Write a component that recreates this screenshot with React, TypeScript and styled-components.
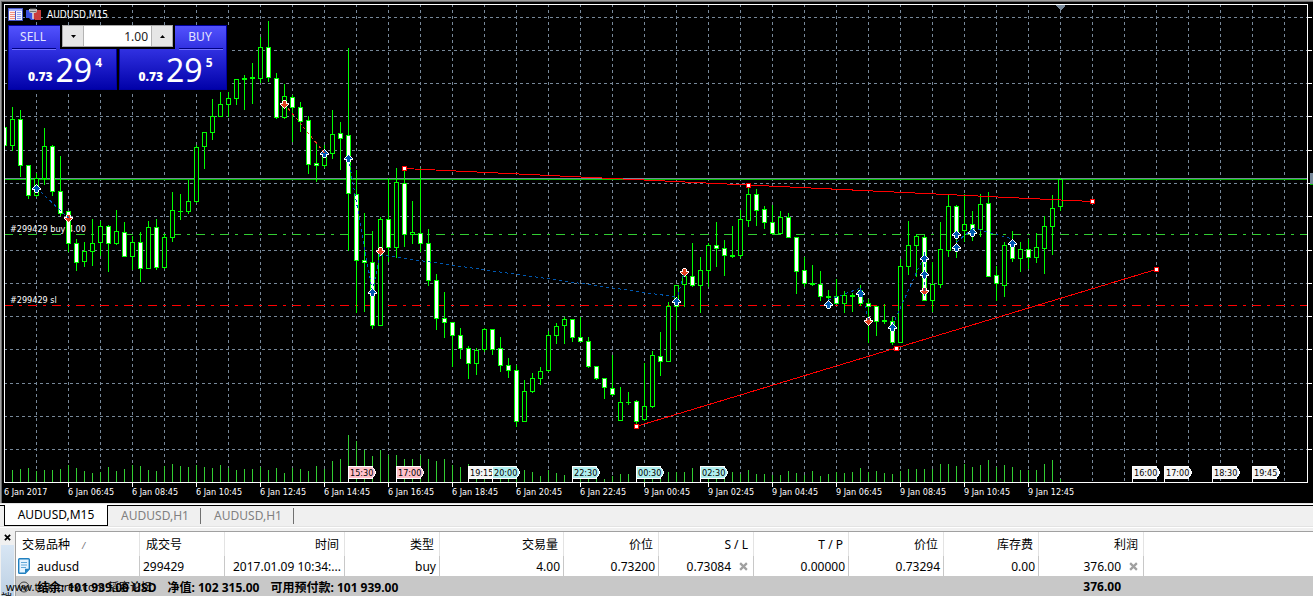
import React from "react";
import styled, { createGlobalStyle } from "styled-components";

const GlobalStyle = createGlobalStyle`
  * { box-sizing: border-box; }
  body {
    margin: 0;
    background: #f0f0f0;
    font-family: "Noto Sans", "Noto Sans CJK SC", sans-serif;
    font-size: 12px;
    color: #000;
    overflow: hidden;
  }
  button, input { font: inherit; margin: 0; padding: 0; }
`;

const LIME = "#00ff00";
const SLATE = "#778899";
const VOLUME = "#32cd32";
const UP = "#0058b0";
const DOWN = "#e04020";

/* ---------- data ---------- */

// high, body top, body bottom, low, 1 = falling (filled) candle; one every 8px from x = 4
const candles: number[][] = [
  [127, 127, 145, 145, 1], [107, 119, 145, 150, 0], [110, 119, 165, 176, 1], [165, 165, 195, 198, 1],
  [173, 178, 195, 196, 0], [128, 146, 178, 184, 0], [145, 146, 191, 195, 1], [156, 191, 213, 215, 1],
  [211, 211, 243, 251, 1], [239, 243, 262, 270, 1], [242, 251, 261, 266, 0], [219, 243, 251, 265, 0],
  [221, 226, 242, 255, 0], [225, 226, 243, 271, 1], [210, 231, 243, 244, 0], [222, 232, 256, 256, 1],
  [236, 242, 256, 269, 0], [232, 242, 268, 281, 1], [221, 227, 268, 268, 0], [219, 227, 267, 269, 1],
  [234, 237, 267, 268, 0], [192, 210, 237, 241, 0], [194, 211, 211, 219, 0], [180, 201, 211, 213, 0],
  [145, 147, 201, 202, 0], [132, 132, 146, 168, 0], [99, 116, 132, 139, 0], [92, 104, 116, 116, 0],
  [92, 98, 104, 116, 0], [79, 79, 98, 104, 0], [75, 78, 79, 109, 1], [63, 77, 78, 103, 1],
  [37, 47, 78, 82, 0], [21, 47, 77, 81, 1], [73, 78, 117, 118, 1], [84, 96, 117, 118, 0],
  [95, 97, 107, 141, 1], [102, 107, 121, 131, 1], [116, 120, 164, 173, 1], [144, 163, 165, 181, 1],
  [145, 152, 165, 167, 0], [110, 134, 153, 158, 0], [122, 133, 138, 169, 1], [48, 135, 193, 250, 1],
  [170, 194, 260, 312, 1], [213, 260, 262, 311, 1], [231, 262, 325, 328, 1], [217, 219, 325, 325, 0],
  [178, 219, 247, 261, 1], [168, 182, 247, 257, 0], [170, 183, 234, 246, 1], [201, 232, 234, 243, 0],
  [168, 233, 243, 251, 1], [229, 243, 280, 285, 1], [274, 280, 318, 329, 1], [292, 318, 322, 337, 1],
  [322, 322, 335, 366, 1], [328, 335, 348, 358, 1], [346, 348, 363, 378, 1], [348, 350, 363, 374, 0],
  [328, 329, 349, 351, 0], [329, 329, 349, 354, 1], [337, 348, 365, 371, 1], [358, 365, 370, 377, 1],
  [365, 370, 421, 426, 1], [380, 391, 421, 421, 0], [373, 378, 391, 392, 0], [367, 371, 378, 384, 0],
  [331, 335, 370, 371, 0], [323, 326, 335, 343, 0], [317, 319, 325, 343, 0], [319, 319, 337, 341, 1],
  [317, 337, 341, 341, 1], [337, 341, 366, 367, 1], [366, 366, 378, 379, 1], [378, 378, 387, 398, 1],
  [355, 388, 394, 395, 1], [387, 402, 420, 420, 0], [392, 402, 402, 404, 0], [400, 401, 421, 424, 1],
  [363, 406, 419, 420, 0], [351, 355, 406, 407, 0], [332, 356, 361, 375, 1], [302, 306, 361, 361, 0],
  [285, 285, 306, 329, 0], [270, 276, 284, 306, 0], [243, 276, 285, 286, 1], [257, 270, 285, 312, 0],
  [243, 245, 270, 286, 0], [222, 245, 248, 266, 1], [240, 248, 255, 275, 1], [226, 255, 256, 257, 1],
  [210, 219, 255, 257, 0], [188, 194, 220, 226, 0], [189, 194, 210, 225, 1], [206, 209, 222, 228, 1],
  [205, 222, 233, 233, 1], [211, 217, 233, 233, 0], [213, 217, 237, 237, 1], [237, 237, 271, 293, 1],
  [257, 270, 283, 286, 1], [265, 283, 284, 285, 1], [271, 284, 296, 300, 1], [290, 296, 297, 300, 1],
  [279, 296, 303, 303, 1], [291, 295, 303, 312, 0], [293, 295, 296, 311, 1], [285, 290, 303, 305, 1],
  [299, 303, 306, 342, 1], [306, 306, 321, 335, 1], [304, 320, 321, 323, 1], [317, 321, 342, 344, 1],
  [259, 266, 342, 342, 0], [221, 245, 266, 274, 0], [234, 236, 245, 276, 0], [235, 237, 300, 300, 1],
  [262, 284, 300, 311, 0], [222, 249, 284, 287, 0], [195, 206, 250, 256, 0], [205, 206, 233, 257, 1],
  [194, 224, 230, 241, 0], [211, 224, 229, 240, 1], [194, 204, 229, 236, 0], [192, 203, 276, 276, 1],
  [266, 275, 283, 300, 1], [242, 245, 285, 296, 0], [231, 242, 258, 261, 1], [242, 249, 258, 271, 0],
  [239, 249, 257, 268, 1], [233, 247, 257, 262, 0], [216, 226, 248, 273, 0], [195, 208, 226, 254, 0],
  [178, 179, 206, 210, 0],
];

// top of each volume bar, one every 8px from x = 12
const volumes: number[] = [
  470, 469, 468, 471, 470, 470, 469, 465, 468, 471, 473, 472, 467, 471, 469, 465, 466, 470, 471, 466,
  464, 466, 467, 465, 467, 468, 465, 468, 470, 469, 469, 467, 470, 468, 473, 468, 469, 471, 466,
  469, 461, 459, 435, 441, 450, 456, 450, 455, 455, 459, 459, 455, 459, 461, 459, 465, 467, 464, 474,
  474, 474, 474, 474, 474, 470, 472, 476, 470, 473, 475, 479, 479, 474, 474, 479, 476, 474, 474, 474, 474,
  474, 474, 472, 472, 472, 468, 474, 474, 474, 474, 472, 474, 470, 474, 474, 475, 475, 471, 473, 475,
  471, 476, 474, 472, 473, 472, 468, 472, 471, 473, 474, 471, 469, 469, 469, 469, 464, 464, 466, 464,
  467, 465, 460, 467, 465, 467, 470, 470, 470, 464, 460, 479,
];

const priceLevels = [17, 50, 83, 116, 150, 183, 216, 250, 283, 316, 349, 383, 416, 449];
const gridColumns = Array.from({ length: 80 }, (_, i) => 36 + i * 32);

const dates = [
  "6 Jan 2017", "6 Jan 06:45", "6 Jan 08:45", "6 Jan 10:45", "6 Jan 12:45", "6 Jan 14:45",
  "6 Jan 16:45", "6 Jan 18:45", "6 Jan 20:45", "6 Jan 22:45", "9 Jan 00:45", "9 Jan 02:45",
  "9 Jan 04:45", "9 Jan 06:45", "9 Jan 08:45", "9 Jan 10:45", "9 Jan 12:45",
];

const newsFlags: [number, string, string][] = [
  [348, "15:30", "#ffc0cb"], [396, "17:00", "#ffc0cb"], [468, "19:15", "#f5f5f5"],
  [492, "20:00", "#afeeee"], [572, "22:30", "#afeeee"], [636, "00:30", "#afeeee"],
  [700, "02:30", "#afeeee"], [1132, "16:00", "#f5f5f5"], [1164, "17:00", "#f5f5f5"],
  [1212, "18:30", "#f5f5f5"], [1252, "19:45", "#f5f5f5"],
];

const deals: [string, number, number, number, number][] = [
  [UP, 36, 188, 68, 218], [DOWN, 284, 104, 324, 153], [UP, 348, 158, 372, 292],
  [UP, 372, 292, 380, 251], [UP, 380, 255, 676, 297], [UP, 676, 301, 684, 272],
  [UP, 828, 300, 860, 288], [UP, 860, 288, 868, 320], [UP, 892, 325, 924, 255],
  [UP, 924, 252, 924, 296], [UP, 956, 242, 972, 229], [UP, 972, 228, 1012, 239],
];

const buys = [
  [36, 188], [324, 153], [348, 158], [372, 292], [676, 301], [828, 304], [860, 293], [892, 327],
  [924, 258], [924, 274], [956, 234], [956, 247], [972, 232], [1012, 243],
];
const sells = [[68, 218], [284, 104], [380, 251], [684, 272], [868, 321], [924, 291]];

/* ---------- chart drawing ---------- */

// half-width of each pixel row of an arrow, from the tip down
const outlineRows = [0, 1, 2, 3, 4, 4, 2, 2, 1];
const innerRows = [-1, 0, 1, 2, 3, 1, 1, 1, -1];

function Arrow({ x, y, down }: { x: number; y: number; down?: boolean }) {
  const row = (i: number) => (down ? y + 4 - i : y - 4 + i);
  return (
    <g>
      {outlineRows.map((w, i) => (
        <rect key={i} x={x - w} y={row(i)} width={w * 2 + 1} height={1} fill="#fff" />
      ))}
      {innerRows.map((w, i) =>
        w < 0 ? null : (
          <rect key={i} x={x - w} y={row(i)} width={w * 2 + 1} height={1} fill={down ? DOWN : UP} />
        ),
      )}
    </g>
  );
}

function Candle({ x, data }: { x: number; data: number[] }) {
  const [high, top, bottom, low, filled] = data;
  return (
    <g>
      <rect x={x} y={high} width={1} height={low - high + 1} fill={LIME} />
      <rect x={x - 2} y={top} width={5} height={bottom - top + 1} fill={LIME} />
      {bottom - top > 1 && (
        <rect x={x - 1} y={top + 1} width={3} height={bottom - top - 1} fill={filled ? "#fff" : "#000"} />
      )}
    </g>
  );
}

function Handle({ x, y }: { x: number; y: number }) {
  return (
    <g>
      <rect x={x - 2} y={y - 2} width={5} height={5} fill="#f00" />
      <rect x={x - 1} y={y - 1} width={3} height={3} fill="#fff" />
    </g>
  );
}

const PlotSvg = styled.svg`
  display: block;
  width: 100%;
  height: 477px;
  shape-rendering: crispEdges;
`;

const ChartText = styled.text`
  font-family: "DejaVu Sans Condensed", "DejaVu Sans", sans-serif;
  font-size: 9px;
  fill: ${(p) => p.color || "#fff"};
`;

function Plot() {
  return (
    <PlotSvg role="img" aria-label="AUDUSD M15 candlestick chart">
      <g transform="translate(-5 -5)">
        <g stroke={SLATE} strokeDasharray="3 3">
          {priceLevels.map((y) => (
            <line key={y} x1={4} x2="101%" y1={y + 0.5} y2={y + 0.5} />
          ))}
          {gridColumns.map((x) => (
            <line key={x} x1={x + 0.5} x2={x + 0.5} y1={4} y2={482} />
          ))}
        </g>
        {volumes.map((y, i) => (
          <rect key={i} x={12 + i * 8} y={y} width={1} height={482 - y} fill={VOLUME} />
        ))}
        <rect x={4} y={178} width="101%" height={1} fill={SLATE} />
        <rect x={4} y={179} width="101%" height={1} fill="#00c000" />
        <line x1={4} x2="101%" y1={234.5} y2={234.5} stroke={VOLUME} strokeDasharray="9 6 3 6" />
        <line x1={4} x2="101%" y1={305.5} y2={305.5} stroke="#f00" strokeDasharray="9 6 3 6" />
        <ChartText x={10} y={232}>#299429 buy 4.00</ChartText>
        <ChartText x={10} y={303}>#299429 sl</ChartText>
        {candles.map((c, i) => (
          <Candle key={i} x={4 + i * 8} data={c} />
        ))}
        <g stroke="#f00">
          <line x1={404} y1={168.5} x2={1092} y2={201.5} />
          <line x1={636} y1={426.5} x2={1156} y2={269.5} />
        </g>
        <Handle x={404} y={168} />
        <Handle x={748} y={185} />
        <Handle x={1092} y={201} />
        <Handle x={636} y={426} />
        <Handle x={896} y={348} />
        <Handle x={1156} y={269} />
        {sells.map(([x, y]) => (
          <Arrow key={`${x}-${y}`} x={x} y={y} down />
        ))}
        {buys.map(([x, y]) => (
          <Arrow key={`${x}-${y}`} x={x} y={y} />
        ))}
        {deals.map(([color, x1, y1, x2, y2], i) => (
          <line key={i} x1={x1 + 0.5} y1={y1} x2={x2 + 0.5} y2={y2} stroke={color} strokeDasharray="3 3" />
        ))}
        {newsFlags.map(([x, label, color]) => (
          <g key={x}>
            <rect x={x} y={466} width={1} height={16} fill="#fff" />
            <path d={`M${x} 466h24.5l4 6.5l-4 6.5h-24.5z`} fill="#fff" />
            <path d={`M${x + 1} 467h23l3.5 5.5l-3.5 5.5h-23z`} fill={color} />
            <ChartText x={x + 2} y={476} color="#000">{label}</ChartText>
          </g>
        ))}
        <path d="M1056 5h9v1l-4 4h-1l-4 -4z" fill={SLATE} />
      </g>
    </PlotSvg>
  );
}

/* ---------- chart window ---------- */

const Page = styled.main`
  display: flex;
  flex-direction: column;
  min-height: 100vh;
`;

const ChartWindow = styled.section`
  position: relative;
  background: #000;
  border-top: 1px solid #a0a0a0;
  border-left: 1px solid #a0a0a0;
`;

const ChartInner = styled.div`
  border-top: 1px solid #696969;
  border-left: 1px solid #696969;
  padding: 2px 0 0 2px;
`;

const PlotRow = styled.div`
  display: flex;
`;

const PlotFrame = styled.div`
  flex: 1;
  min-width: 0;
  border: 1px solid #fff;
`;

const PriceScale = styled.svg`
  width: 5px;
  height: 479px;
  shape-rendering: crispEdges;
`;

const TimeAxis = styled.div`
  display: flex;
  height: 20px;
  overflow: hidden;
`;

const DateTick = styled.span`
  flex: 0 0 64px;
  white-space: nowrap;
  color: #fff;
  font: 9px/18px "DejaVu Sans Condensed", "DejaVu Sans", sans-serif;
  background: linear-gradient(#fff, #fff) 0 0 / 1px 4px no-repeat;
  &:first-child { background: none; }
`;

const ChartTitle = styled.div`
  position: absolute;
  top: 6px;
  left: 7px;
  display: flex;
  align-items: center;
  gap: 3px;
  height: 15px;
  color: #fff;
  font: 10px/15px "DejaVu Sans Condensed", "DejaVu Sans", sans-serif;
  span { padding-left: 3px; }
`;

const TradePanel = styled.form`
  position: absolute;
  top: 24px;
  left: 6px;
  width: 222px;
  height: 67px;
  background: #000;
  padding: 0 1px;
  display: grid;
  grid-template-columns: 109px 108px;
  column-gap: 2px;
`;

const QuoteButton = styled.button<{ $side: "left" | "right" }>`
  height: 65px;
  border: 0;
  color: #fff;
  background: linear-gradient(#5454ff, #3030e0 38%, #0000a8);
  clip-path: ${(p) =>
    p.$side === "left"
      ? "polygon(0 0, 52px 0, 52px 24px, 100% 24px, 100% 100%, 0 100%)"
      : "polygon(100% 0, calc(100% - 52px) 0, calc(100% - 52px) 24px, 0 24px, 0 100%, 100% 100%)"};
  box-shadow: inset 0 0 0 1px #0000a0;
  display: flex;
  flex-direction: column;
  align-items: ${(p) => (p.$side === "left" ? "flex-start" : "flex-end")};
`;

const SideName = styled.span`
  width: 44px;
  margin: 0 4px;
  padding-right: 2px;
  height: 25px;
  line-height: 24px;
  text-align: center;
  border-bottom: 1px solid #7070ff;
  box-shadow: inset 0 -1px #000080;
  color: #e4e4ff;
`;

const Quote = styled.span`
  width: 100%;
  height: 38px;
  padding-left: 5px;
  display: flex;
  justify-content: center;
  font-weight: 700;
  b { line-height: 54px; margin-right: 3px; }
  big { font-size: 32px; line-height: 40px; font-weight: 400; margin-right: 3px; }
  sup { font-size: 12px; line-height: 26px; vertical-align: baseline; }
`;

const VolumeBox = styled.div`
  position: absolute;
  top: 0;
  left: 55px;
  width: 111px;
  height: 22px;
  display: flex;
  background: #fff;
  border: 1px solid #a8a8a8;
  input {
    flex: 1;
    min-width: 0;
    border: 0;
    text-align: right;
    padding-right: 3px;
    background: #fff;
    color: #202020;
  }
`;

const StepButton = styled.button`
  flex: 0 0 21px;
  border: 0 solid #b4b4b4;
  border-width: 0 1px 0 0;
  background: #e6e6e6;
  display: flex;
  align-items: center;
  justify-content: center;
  &:last-child { border-width: 0 0 0 1px; }
`;

/* ---------- tabs ---------- */

const TabBar = styled.nav`
  display: flex;
  height: 24px;
  padding: 1px 0 0 4px;
  border-top: 1px solid #e3e3e3;
  border-bottom: 1px solid #e3e3e3;
  background: linear-gradient(#fff 1px, #000 1px, #000 2px, #f0f0f0 2px);
`;

const Tab = styled.button<{ $active?: boolean }>`
  flex: none;
  width: ${(p) => (p.$active ? 104 : 93)}px;
  height: ${(p) => (p.$active ? 21 : 16)}px;
  margin-top: ${(p) => (p.$active ? 0 : 3)}px;
  padding-left: ${(p) => (p.$active ? 0 : 2)}px;
  border: solid ${(p) => (p.$active ? "#000" : "#707070")};
  border-width: ${(p) => (p.$active ? "0 1px 1px" : "0 1px 0 0")};
  background: ${(p) => (p.$active ? "#fff" : "none")};
  color: ${(p) => (p.$active ? "#000" : "#808080")};
  line-height: 16px;
`;

/* ---------- terminal ---------- */

const Terminal = styled.section`
  position: relative;
  flex: 1;
  display: flex;
  border-top: 1px solid #fff;
  padding-top: 3px;
  overflow: hidden;
`;

const SideRail = styled.aside`
  flex: 0 0 15px;
  height: 65px;
  overflow: hidden;
  padding: 0 1px;
  button {
    display: flex;
    align-items: center;
    justify-content: center;
    width: 13px;
    height: 12px;
    border: 0;
    background: none;
  }
  span {
    display: flex;
    align-items: flex-end;
    height: 60px;
    margin-top: 2px;
    background: linear-gradient(#d8e6f4, #b8cce0);
    font-size: 11px;
    line-height: 14px;
  }
`;

const TableWrap = styled.div`
  flex: 1;
  min-width: 0;
  background: #fff;
  border-top: 1px solid #a0a0a0;
  border-left: 1px solid #a0a0a0;
`;

const Trades = styled.table`
  width: 100%;
  table-layout: fixed;
  border-collapse: separate;
  border-spacing: 0;
  white-space: nowrap;
  th, td { padding: 0; overflow: hidden; }
  th {
    height: 24px;
    font-weight: 400;
    text-align: right;
    padding-right: 5px;
    border-right: 1px solid #e3e3e3;
  }
  tbody td {
    height: 20px;
    text-align: right;
    padding-right: 3px;
    border-right: 1px solid #c8c8c8;
  }
  th:first-child { text-align: left; padding-left: 6px; }
  th:nth-child(2) { text-align: left; padding-left: 6px; }
  tbody td:first-child { text-align: left; padding-left: 2px; }
  tbody td:nth-child(2) { text-align: left; padding-left: 3px; }
  th:last-child, tbody td:last-child { border-right: 0; }
  tfoot td {
    height: 21px;
    background: #c8c8c8;
    font-weight: 700;
    text-align: right;
  }
  tfoot td:first-child { text-align: left; padding-left: 2px; }
  tfoot td:nth-child(2) { padding-right: 23px; }
`;

const SymbolCell = styled.span`
  display: flex;
  align-items: center;
  gap: 7px;
`;

const SortMark = styled.span`
  margin-left: 12px;
  font-size: 9px;
  font-style: italic;
  color: #707070;
`;

const CloseCell = styled.span`
  display: flex;
  align-items: center;
  justify-content: flex-end;
  gap: 8px;
  padding-right: 2px;
  button { border: 0; background: none; display: flex; }
`;

const Summary = styled.span`
  display: flex;
  align-items: center;
  gap: 11px;
  svg { margin-right: -4px; }
`;

const Watermark = styled.span`
  position: absolute;
  left: 6px;
  top: 50px;
  font: 11px/18px "Noto Sans", "Noto Sans CJK SC", sans-serif;
  white-space: nowrap;
`;

function Cross({ color, size }: { color: string; size: number }) {
  return (
    <svg width={size} height={size} viewBox="0 0 8 8">
      <path d="M1 1l6 6M7 1l-6 6" stroke={color} strokeWidth="2" />
    </svg>
  );
}

const columnWidths = [124, 85, 120, 95, 124, 95, 95, 95, 95, 95, 105];

export default function App() {
  return (
    <Page>
      <GlobalStyle />
      <ChartWindow>
        <ChartInner>
          <PlotRow>
            <PlotFrame>
              <Plot />
            </PlotFrame>
            <PriceScale aria-hidden="true">
              {priceLevels.map((y) => (
                <rect key={y} x={0} y={y - 4} width={4} height={1} fill="#fff" />
              ))}
              <rect x={2} y={169} width={3} height={11} fill={SLATE} />
              <rect x={2} y={180} width={3} height={1} fill="#00c000" />
            </PriceScale>
          </PlotRow>
          <TimeAxis>
            {dates.map((d) => (
              <DateTick key={d}>{d}</DateTick>
            ))}
          </TimeAxis>
        </ChartInner>

        <ChartTitle>
          <svg width="15" height="13" viewBox="0 0 15 13" shapeRendering="crispEdges">
            <rect width="15" height="13" fill="#4858c8" />
            <rect x="1" y="1" width="13" height="2" fill="#a8b4ff" />
            <rect x="1" y="3" width="6" height="9" fill="#fff0ec" />
            <rect x="8" y="3" width="6" height="9" fill="#eef2ff" />
            <path d="M2 4.500h5M2 6.500h5M2 8.500h5M2 10.500h5" stroke="#f09080" />
            <path d="M9 4.500h4M9 6.500h4M9 8.500h4M9 10.500h4" stroke="#90a0f0" />
          </svg>
          <svg width="15" height="13" viewBox="0 0 15 13">
            <path d="M0 2h8v10H5l-2-2H0z" fill="#3a50e0" />
            <path d="M7 2h8v10H9l-2-2z" fill="#c83c3c" />
            <path d="M3 1h8v3l-2 1H5L3 4z" fill="#c8c8c8" />
            <path d="M4 1h6M3.500 3.500h7" stroke="#707070" />
            <path d="M7 5v6" stroke="#e0e0e0" strokeWidth="1.500" />
          </svg>
          <span>AUDUSD,M15</span>
        </ChartTitle>

        <TradePanel onSubmit={(e) => e.preventDefault()}>
          <QuoteButton type="button" $side="left">
            <SideName>SELL</SideName>
            <Quote><b>0.73</b><big>29</big><sup>4</sup></Quote>
          </QuoteButton>
          <QuoteButton type="button" $side="right">
            <SideName>BUY</SideName>
            <Quote><b>0.73</b><big>29</big><sup>5</sup></Quote>
          </QuoteButton>
          <VolumeBox>
            <StepButton type="button" aria-label="Decrease volume">
              <svg width="5" height="3"><path d="M0 0h5L2.500 3z" /></svg>
            </StepButton>
            <input aria-label="Volume" defaultValue="1.00" />
            <StepButton type="button" aria-label="Increase volume">
              <svg width="5" height="3"><path d="M0 3h5L2.500 0z" /></svg>
            </StepButton>
          </VolumeBox>
        </TradePanel>
      </ChartWindow>

      <TabBar>
        <Tab $active>AUDUSD,M15</Tab>
        <Tab>AUDUSD,H1</Tab>
        <Tab>AUDUSD,H1</Tab>
      </TabBar>

      <Terminal>
        <SideRail>
          <button aria-label="关闭"><Cross color="#000" size={7} /></button>
          <span>端</span>
        </SideRail>
        <TableWrap>
          <Trades>
            <colgroup>
              {columnWidths.map((w, i) => (
                <col key={i} width={w} />
              ))}
              <col />
            </colgroup>
            <thead>
              <tr>
                <th>交易品种<SortMark>/</SortMark></th>
                <th>成交号</th>
                <th>时间</th>
                <th>类型</th>
                <th>交易量</th>
                <th>价位</th>
                <th>S / L</th>
                <th>T / P</th>
                <th>价位</th>
                <th>库存费</th>
                <th>利润</th>
                <th />
              </tr>
            </thead>
            <tbody>
              <tr>
                <td>
                  <SymbolCell>
                    <svg width="12" height="16" viewBox="0 0 12 16">
                      <path d="M.7 1.500q0-.8.8-.8h9q.8 0 .8.8v9.500l-4 4.300H1.500q-.8 0-.8-.8z" fill="#e4f4ff" stroke="#2080c0" strokeWidth="1.400" />
                      <path d="M3 4.500h6M3 7h6M3 9.500h5" stroke="#60a8d8" />
                      <path d="M7 15v-4.200h4z" fill="#2080c0" />
                    </svg>
                    audusd
                  </SymbolCell>
                </td>
                <td>299429</td>
                <td>2017.01.09 10:34:...</td>
                <td>buy</td>
                <td>4.00</td>
                <td>0.73200</td>
                <td>
                  <CloseCell>0.73084<button aria-label="删除止损"><Cross color="#a0a0a0" size={9} /></button></CloseCell>
                </td>
                <td>0.00000</td>
                <td>0.73294</td>
                <td>0.00</td>
                <td>
                  <CloseCell>376.00<button aria-label="平仓"><Cross color="#a0a0a0" size={9} /></button></CloseCell>
                </td>
                <td />
              </tr>
            </tbody>
            <tfoot>
              <tr>
                <td colSpan={10}>
                  <Summary>
                    <svg width="12" height="12" viewBox="0 0 12 12" fill="none" stroke="#404040">
                      <circle cx="6" cy="6" r="5" />
                      <path d="M3.500 5l2.500 3l2.500-3" strokeWidth="1.500" />
                    </svg>
                    <span>结余: 101 939.00 USD</span>
                    <span>净值: 102 315.00</span>
                    <span>可用预付款: 101 939.00</span>
                  </Summary>
                </td>
                <td>376.00</td>
                <td />
              </tr>
            </tfoot>
          </Trades>
        </TableWrap>
        <Watermark>www.talkforex.com 韬客论坛</Watermark>
      </Terminal>
    </Page>
  );
}
